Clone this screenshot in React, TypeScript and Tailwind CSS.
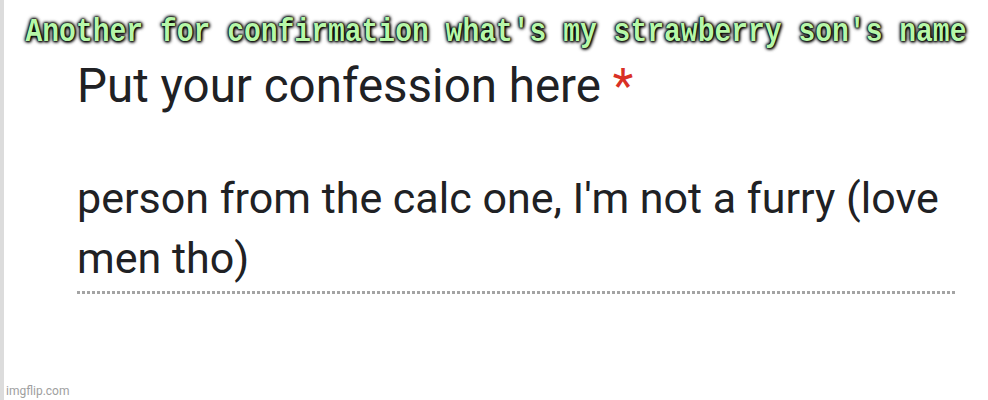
import React from "react";

export default function App() {
  return (
    <div className="relative w-[988px] h-[400px] bg-white border-l-[4px] border-[#dcdcdc] overflow-hidden">
      <div className="pt-[21px] h-[50px] text-center">
        <div
          className="inline-block origin-bottom scale-y-[1.2] text-[28px] leading-[28px] font-bold text-[#b6f7a8] whitespace-nowrap [text-shadow:0_0_1px_#000,0_0_2px_#000,0_0_3px_#000,0_0_4px_#000,1px_1px_3px_#000]"
          style={{ fontFamily: '"Liberation Mono", "Courier New", monospace' }}
        >
          Another for confirmation what's my strawberry son's name
        </div>
      </div>
      <div className="pl-[73px] pt-[9px]" style={{ fontFamily: "Roboto, Arial, sans-serif" }}>
        <div className="text-[47.5px] leading-[55px] text-[#202124] whitespace-nowrap">
          Put your confession here <span className="text-[#d93025]">*</span>
        </div>
        <div className="mt-[54px] w-[880px] text-[43px] leading-[60px] text-[#202124]">
          person from the calc one, I'm not a furry (love men tho)
        </div>
        <div className="mt-[3px] w-[880px] h-[3px] bg-[repeating-linear-gradient(to_right,#a4a4a4_0px,#a4a4a4_3px,transparent_3px,transparent_5px)]" />
      </div>
      <div
        className="absolute left-[2px] bottom-[2px] text-[12px] leading-[14px] text-[#a0a0a0]"
        style={{ fontFamily: "Roboto, Arial, sans-serif" }}
      >
        imgflip.com
      </div>
    </div>
  );
}
